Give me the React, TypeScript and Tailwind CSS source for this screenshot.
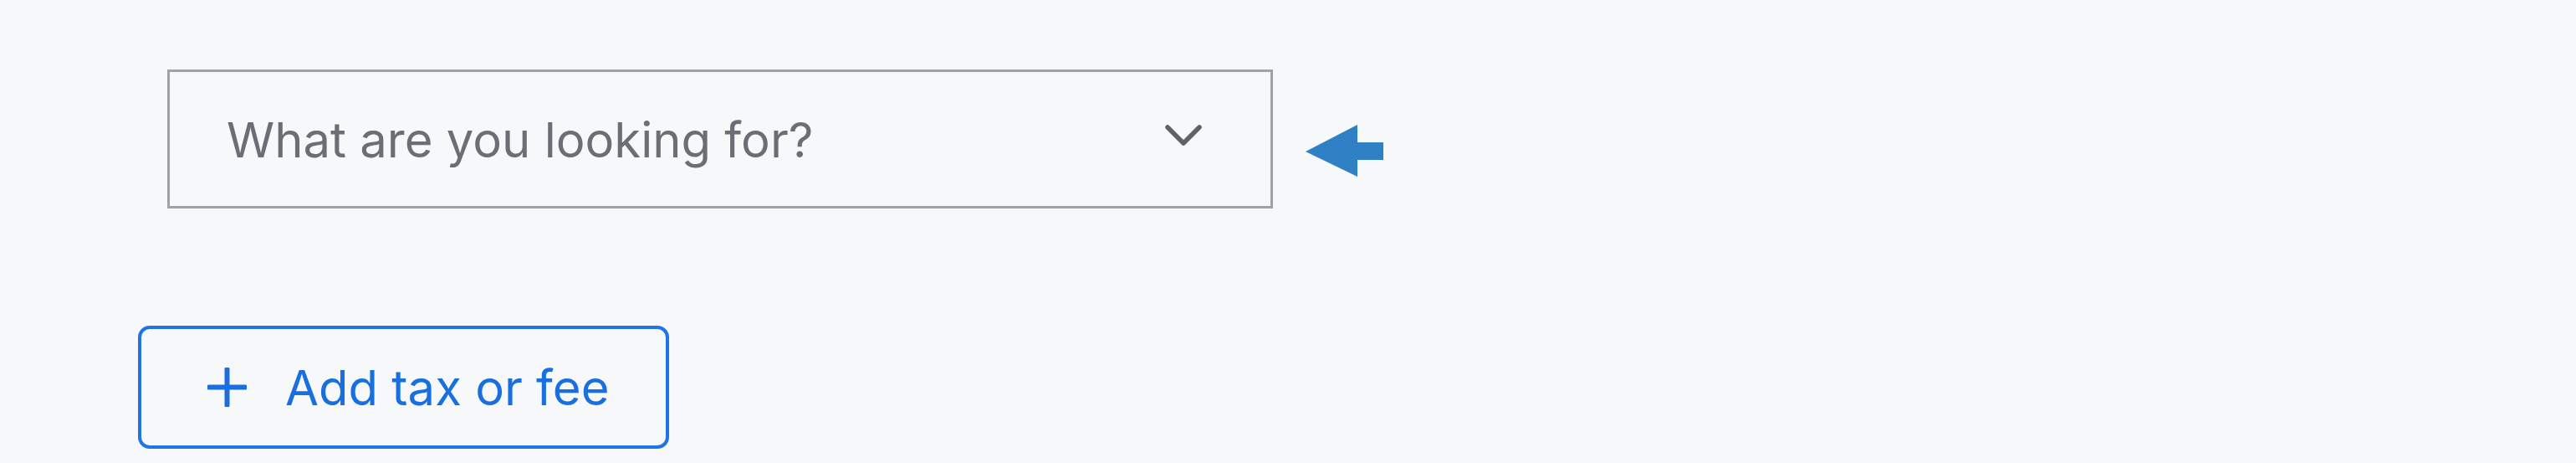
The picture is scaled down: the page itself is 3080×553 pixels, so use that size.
export default function App() {
  return (
    <div className="min-h-[553px] w-full bg-[#f7f8fa] pl-[165px] pt-[83px] font-['Inter',sans-serif]">
      {/* Select + pointer arrow */}
      <div className="ml-[35px] flex">
        <div className="flex h-[166px] w-[1322px] items-center justify-between border-[3px] border-[#9ea1a6] pl-[68px] pr-[82px]">
          <span className="mt-[2px] text-[58px] leading-none text-[#6b6f75]">What are you looking for?</span>
          <svg width="44" height="26" viewBox="0 0 44 26" className="-mt-[8px]">
            <polyline
              points="3,3 22,22 41,3"
              fill="none"
              stroke="#5f6368"
              strokeWidth="5.5"
              strokeLinecap="round"
              strokeLinejoin="round"
            />
          </svg>
        </div>
        <svg width="93" height="62" viewBox="0 0 93 62" className="ml-[39px] mt-[66px]">
          <polygon points="0,32 62,0 62,21 93,21 93,42 62,42 62,62" fill="#2f80c4" />
        </svg>
      </div>

      {/* Add tax or fee */}
      <button className="mt-[140px] flex h-[147px] w-[635px] items-center rounded-[14px] border-[4px] border-[#1f74e6] pl-[79px] text-[#1a6fe0]">
        <svg width="47" height="47" viewBox="0 0 47 47">
          <path d="M23.5 2v43M2 23.5h43" stroke="currentColor" strokeWidth="6" strokeLinecap="round" />
        </svg>
        <span className="ml-[46px] text-[58px] leading-none">Add tax or fee</span>
      </button>
    </div>
  );
}
